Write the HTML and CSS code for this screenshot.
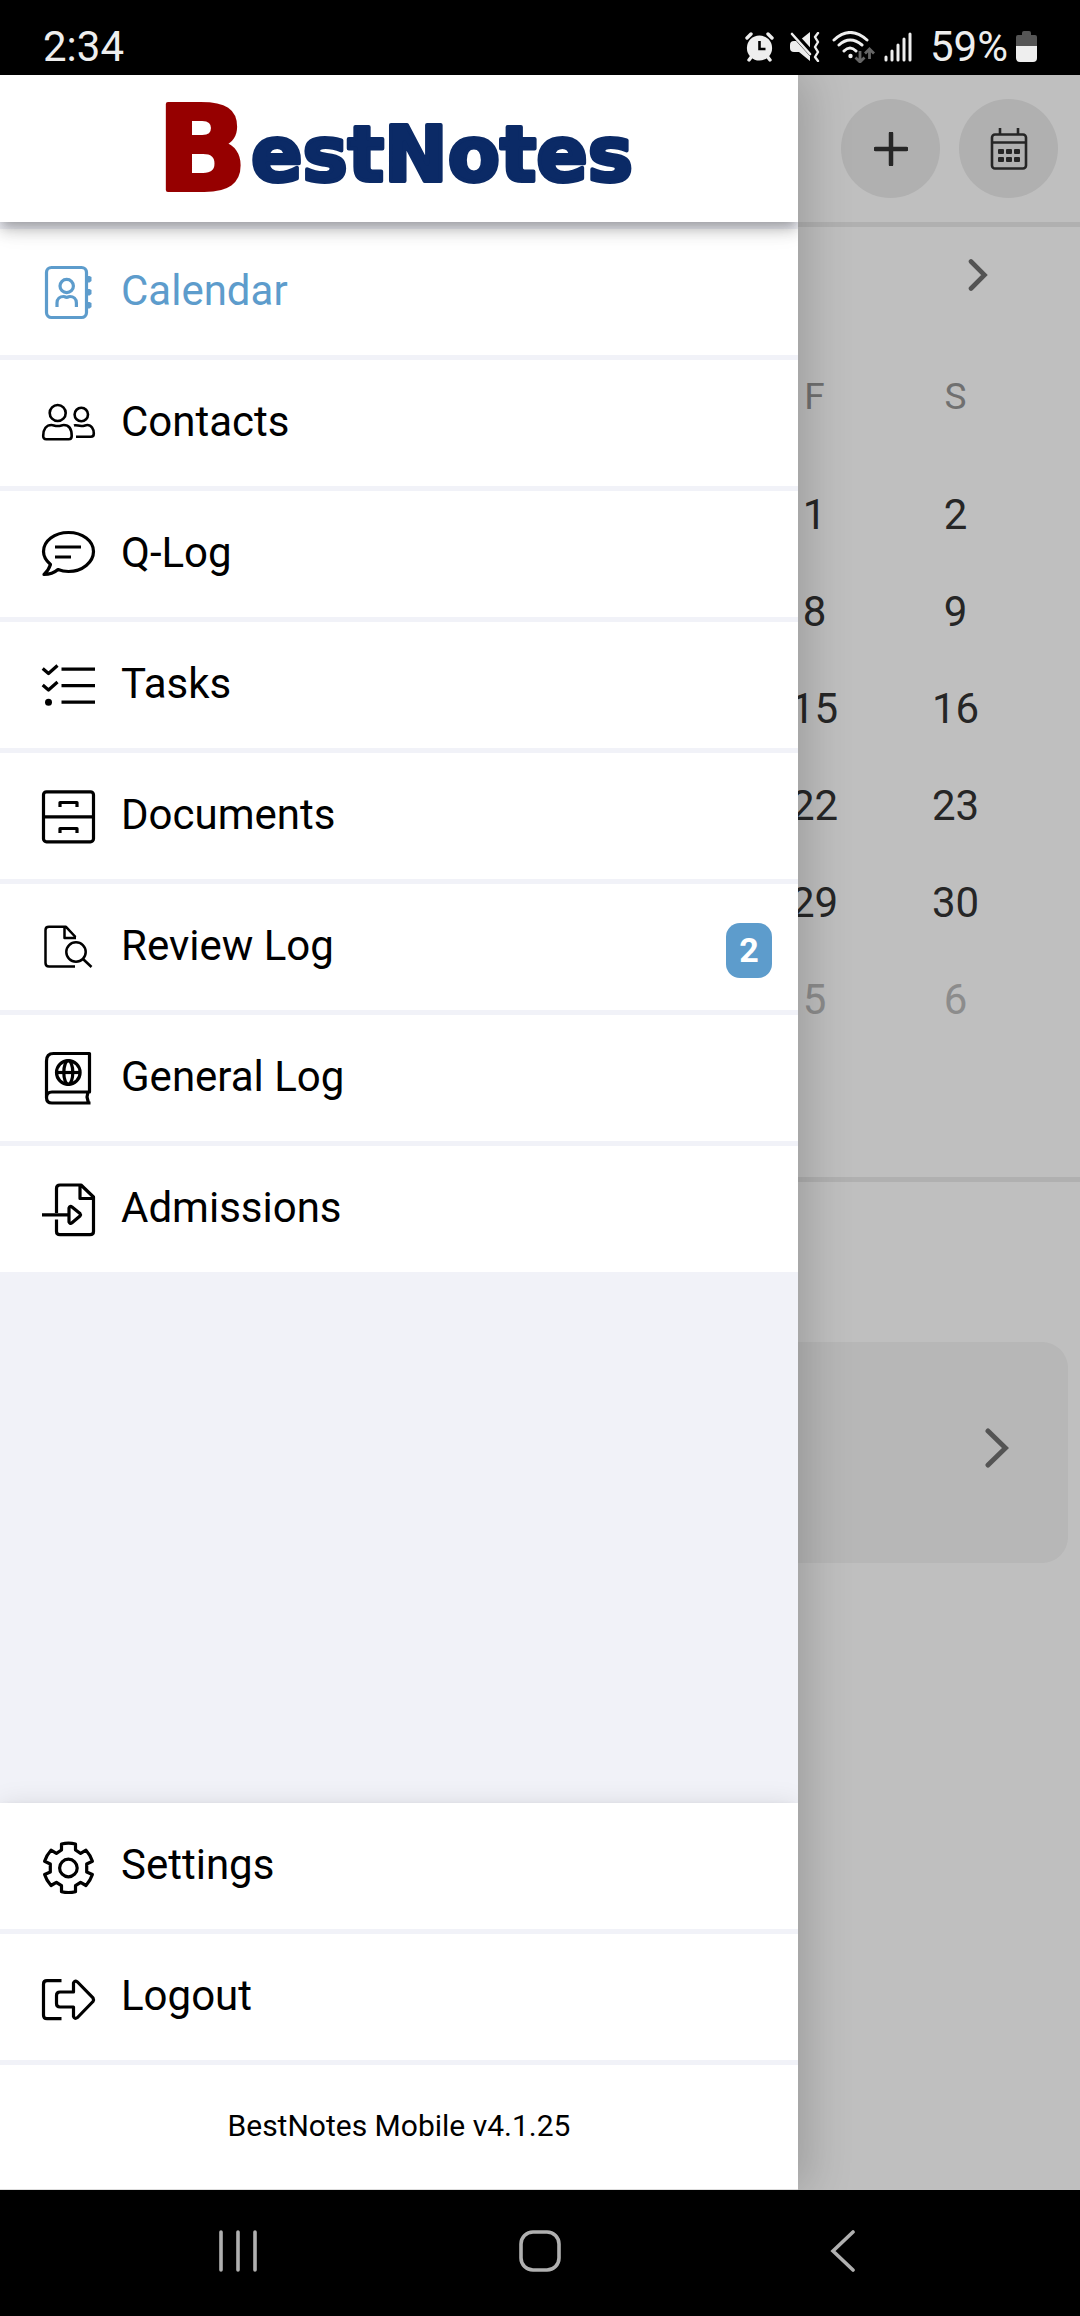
FILE: index.html
```html
<!DOCTYPE html>
<html lang="en">
<head>
<meta charset="utf-8">
<meta name="viewport" content="width=device-width, initial-scale=1">
<title>BestNotes Mobile</title>
<link rel="stylesheet" href="styles.css">
</head>
<body>
<div class="status-bar">
  <time class="status-text">2:34</time>
  <div class="status-icons">
    <svg width="32" height="30" viewBox="0 0 32 30" aria-hidden="true">
      <g stroke="#eee" stroke-width="3.4" stroke-linecap="round" fill="none"><path d="M2 6 6 2M23 2l4 4M7 24l-3 4M22 24l3 4"/></g>
      <circle cx="14.5" cy="16" r="12.6" fill="#eee"/>
      <path d="M14.5 9v8h6" fill="none" stroke="#000" stroke-width="2.6"/>
    </svg>
    <svg width="36" height="30" viewBox="0 0 36 30" aria-hidden="true">
      <path d="M25 0v29L14 20H9q-4 0-4-4v-3q0-4 4-4h3l3-1z" fill="#eee"/>
      <path d="M7 0 27 22" stroke="#000" stroke-width="6"/>
      <path d="M7 2 25 22" stroke="#eee" stroke-width="2.6" stroke-linecap="round"/>
      <path d="M33 1l-3 4 3 5-3 5 3 5-3 5 3 4" fill="none" stroke="#eee" stroke-width="2.4" stroke-linejoin="round" stroke-linecap="round"/>
    </svg>
    <svg width="47" height="32" viewBox="0 0 47 32" aria-hidden="true">
      <g fill="none" stroke="#eee" stroke-width="3" stroke-linecap="round"><path d="M5 9q16-15 33 0M10 14q11-10 23 0M15 20q6-6 12 0"/></g>
      <circle cx="21.5" cy="25" r="2.2" fill="#eee"/>
      <g fill="none" stroke="#666" stroke-width="2.8"><path d="M31 20v10M26.5 26.5 31 31l4.500-4.500M40.500 28V18M36 22.500l4.500-4.500 4.500 4.500"/></g>
    </svg>
    <svg width="38" height="30" viewBox="0 0 38 30" aria-hidden="true">
      <path d="M2 25v3M8 19v9M14 13v15M20 7v21M26 2v26" stroke="#eee" stroke-width="3" stroke-linecap="round"/>
    </svg>
    <span class="status-text">59%</span>
    <svg width="21" height="31" viewBox="0 0 21 31" aria-hidden="true">
      <path d="M0 15V6q0-2 2-2h4V2q0-2 2-2h5q2 0 2 2v2h4q2 0 2 2v9z" fill="#555"/>
      <path d="M0 15h21v12q0 4-4 4H4q-4 0-4-4z" fill="#eee"/>
    </svg>
  </div>
</div>

<div class="app">
  <main class="page">
    <header class="page-header">
      <button class="round-button" type="button" aria-label="Add event">
        <svg width="34" height="34" viewBox="0 0 34 34"><path d="M17 1.500v31M1.500 17h31" stroke="#333" stroke-width="4.5" stroke-linecap="round"/></svg>
      </button>
      <button class="round-button" type="button" aria-label="Choose date">
        <svg width="38" height="42" viewBox="0 0 38 42" fill="none" stroke="#333" stroke-width="2.6">
          <rect x="2" y="6.5" width="34" height="34" rx="3"/><path d="M2 14.500h34M10 0v7M28 0v7"/>
          <g fill="#333" stroke="none"><rect x="8" y="21" width="6" height="5" rx="1"/><rect x="16" y="21" width="6" height="5" rx="1"/><rect x="24" y="21" width="6" height="5" rx="1"/><rect x="8" y="29" width="6" height="5" rx="1"/><rect x="16" y="29" width="6" height="5" rx="1"/><rect x="24" y="29" width="6" height="5" rx="1"/></g>
        </svg>
      </button>
    </header>
    <section class="month">
      <div class="month-nav">
        <button class="icon-button" type="button" aria-label="Next month">
          <svg width="20" height="32" viewBox="0 0 20 32"><path d="M3 2.500 16.500 16 3 29.500" fill="none" stroke="#717171" stroke-width="4.6" stroke-linecap="round"/></svg>
        </button>
      </div>
      <table class="month-grid">
        <colgroup><col span="7"></colgroup>
        <thead><tr><td colspan="5"></td><th scope="col">F</th><th scope="col">S</th></tr></thead>
        <tbody>
          <tr><td colspan="5"></td><td>1</td><td>2</td></tr>
          <tr><td colspan="5"></td><td>8</td><td>9</td></tr>
          <tr><td colspan="5"></td><td>15</td><td>16</td></tr>
          <tr><td colspan="5"></td><td>22</td><td>23</td></tr>
          <tr><td colspan="5"></td><td>29</td><td>30</td></tr>
          <tr class="next-month"><td colspan="5"></td><td>5</td><td>6</td></tr>
        </tbody>
      </table>
    </section>
    <section class="events">
      <button class="event-card" type="button" aria-label="Open event">
        <svg width="24" height="40" viewBox="0 0 24 40"><path d="M3 3l17.500 17L3 37" fill="none" stroke="#717171" stroke-width="5" stroke-linecap="round"/></svg>
      </button>
    </section>
  </main>
  <div class="backdrop"></div>

  <aside class="drawer">
    <div class="drawer-body">
      <div class="drawer-header">
        <svg class="logo" width="476" height="100" viewBox="0 0 476 100" role="img" aria-label="BestNotes">
          <text class="logo-b" x="-4" y="91">B</text>
          <text class="logo-rest" x="90" y="82">estNotes</text>
        </svg>
      </div>
      <nav class="menu" aria-label="Main">
        <a class="menu-item active" href="#calendar">
          <svg class="icon" stroke-width="3.2" viewBox="0 0 53 53"><rect x="4.5" y="1.5" width="40" height="50" rx="5"/><circle cx="24.7" cy="20" r="6.7"/><path d="M15 41v-4c0-4 3-6.500 6.500-6.500 1 0 1.500.8 3.200.8s2.200-.8 3.200-.8c3.500 0 6.500 2.500 6.500 6.500v4"/><path class="solid" d="M45 10h2.500l2 1v4l-2 1.500H45zM45 23h2.500l2 1v4l-2 1.500H45zM45 36h2.500l2 1v4l-2 1.500H45z"/></svg>
          <span class="label">Calendar</span>
        </a>
        <a class="menu-item" href="#contacts">
          <svg class="icon" stroke-width="2.6" viewBox="0 0 53 53"><circle cx="15.7" cy="16" r="8"/><circle cx="39.3" cy="17.5" r="6.7"/><path d="M1.200 39C1.200 32 4.500 28 9.500 28c2 0 3 1 6.200 1s4-1 6-1c5 0 8 4 8 11 0 2-1 3.300-3 3.300H4.200c-2 0-3-1.300-3-3.300zM32 28.500c2.500-.9 4 .5 7.300.5s4-1 6-1c4 0 6.500 4 6.500 8.500 0 2-1 3.300-3 3.300H34"/></svg>
          <span class="label">Contacts</span>
        </a>
        <a class="menu-item" href="#q-log">
          <svg class="icon" stroke-width="3.2" viewBox="0 0 53 53"><path d="M8.500 36.500C4.500 33 1.500 28.500 1.500 23.500 1.500 13 12.500 4.500 26.500 4.500S51.500 13 51.500 23.500 40.500 43.500 26.500 43.500c-4 0-7-.6-10.500-2-4 3.500-8 5-14 5 3-2.500 5-5.500 6.500-10zM13 19h26M13 29h16"/></svg>
          <span class="label">Q-Log</span>
        </a>
        <a class="menu-item" href="#tasks">
          <svg class="icon" stroke-width="3.2" viewBox="0 0 53 53"><path d="M.7 9.500 6.500 14.500 15.500 6.500M.7 26 6.500 31l9-8M19.500 10.200H53M19.500 26.700H53M19.500 43.200H53"/><circle class="solid" cx="6.5" cy="43.2" r="3.5"/></svg>
          <span class="label">Tasks</span>
        </a>
        <a class="menu-item" href="#documents">
          <svg class="icon" stroke-width="3.2" viewBox="0 0 53 53"><rect x="1.5" y="1.8" width="50" height="50" rx="3"/><path d="M1.500 26.800h50M18 17v-4.500h17V17M18 43v-4.500h17V43"/></svg>
          <span class="label">Documents</span>
        </a>
        <a class="menu-item" href="#review-log">
          <svg class="icon" stroke-width="2.5" viewBox="0 0 53 53"><path d="M33 45.500H7q-3.500 0-3.500-3.500V9q0-3.200 3.500-3.200h17L33.500 16M22.500 6v11H34"/><circle cx="34" cy="31" r="9.7"/><path d="M41 38l8.500 8"/></svg>
          <span class="label">Review Log</span>
          <span class="badge">2</span>
        </a>
        <a class="menu-item" href="#general-log">
          <svg class="icon" stroke-width="3.2" viewBox="0 0 53 53"><path d="M4.500 46V9q0-7.500 7-7.500h36V40H10q-5.500 0-5.500 5.500T10 51h38.500M46 40l-1 5 1.500 6"/><circle cx="26.3" cy="20.5" r="11.8"/><ellipse cx="26.3" cy="20.5" rx="4.5" ry="11.8"/><path d="M14.500 20.500h24"/></svg>
          <span class="label">General Log</span>
        </a>
        <a class="menu-item" href="#admissions">
          <svg class="icon" stroke-width="3.2" viewBox="0 0 53 53"><path d="M14.500 30V5.500q0-3.500 3.500-3.500h21L51.500 14v34.500q0 3.200-3.500 3.200H18q-3.500 0-3.500-3.200V36.500M38 2v13.500h13M0 31.800h27M27 25v14q1 2.500 3 .8l8-6.800q1-1.200 0-2.400l-8-6.600q-2-1.500-3 1z"/></svg>
          <span class="label">Admissions</span>
        </a>
      </nav>
      <div class="drawer-footer">
        <a class="menu-item" href="#settings">
          <svg class="icon" stroke-width="3.2" viewBox="0 -1 53 53"><path d="M19.500 3q7-1.600 14 0v6l5.100 3.400L44 9.200q4.500 5 6.400 11L44.700 23v8l5.700 2.500q-2 6-6.400 11l-5.400-3.200-5.100 3.400v6q-7 1.600-14 0v-6l-5.100-3.400L9 44.500q-4.500-5-6.400-11L8.300 31v-8l-5.700-2.800Q4.500 14.200 9 9.200l5.400 3.200L19.500 9z"/><circle cx="26.4" cy="27" r="8.8"/></svg>
          <span class="label">Settings</span>
        </a>
        <a class="menu-item" href="#logout">
          <svg class="icon" stroke-width="3.2" viewBox="0 -2 53 53"><path d="M19.500 7.700H5q-3.500 0-3.500 3.500v31q0 3.500 3.500 3.500h14.500M31.500 19H18q-3.500 0-3.500 3.500v8q0 3.500 3.500 3.500h13.500v9.500q1 3 4 1L51 28.500q1-1.800 0-3.600L35.500 9q-3-2-4 1z"/></svg>
          <span class="label">Logout</span>
        </a>
        <p class="version">BestNotes Mobile v4.1.25</p>
      </div>
    </div>
  </aside>
</div>

<div class="system-nav">
  <button class="icon-button" type="button" aria-label="Recent apps"><svg width="42" height="42" viewBox="0 0 42 42"><path d="M4 2v38M21 2v38M38 2v38" stroke="#b0b0b0" stroke-width="3.6" stroke-linecap="round"/></svg></button>
  <button class="icon-button" type="button" aria-label="Home"><svg width="42" height="42" viewBox="0 0 42 42"><rect x="2" y="2" width="38" height="38" rx="12" fill="none" stroke="#b0b0b0" stroke-width="3.6"/></svg></button>
  <button class="icon-button" type="button" aria-label="Back"><svg width="42" height="42" viewBox="0 0 42 42"><path d="M32 2 12 21l20 19" fill="none" stroke="#b0b0b0" stroke-width="3.6" stroke-linecap="round"/></svg></button>
</div>
</body>
</html>
```

FILE: styles.css
```css
* {
  box-sizing: border-box;
}

body {
  margin: 0;
  min-height: 100vh;
  display: flex;
  flex-direction: column;
  background: #000;
  color: #000;
  font-family: Roboto, "Liberation Sans", sans-serif;
  font-size: 42px;
}

button {
  padding: 0;
  border: 0;
  background: none;
  font: inherit;
}

svg {
  display: block;
  flex: none;
}

/* Phone status bar */
.status-bar {
  height: 75px;
  padding: 18px 43px 0;
  display: flex;
  align-items: center;
  justify-content: space-between;
  color: #eee;
}

.status-icons {
  display: flex;
  align-items: center;
  gap: 8px;
}

/* App area: calendar page with the drawer over it */
.app {
  position: relative;
  flex: 1;
  display: flex;
  flex-direction: column;
  overflow: hidden;
}

.page {
  flex: 1;
  background: #fff;
  color: #333;
}

.page-header {
  height: 152px;
  padding: 0 22px;
  display: flex;
  align-items: center;
  justify-content: flex-end;
  gap: 19px;
  border-bottom: 5px solid #ebebeb;
}

.round-button {
  width: 99px;
  height: 99px;
  display: grid;
  place-items: center;
  border-radius: 50%;
  background: #ebebeb;
}

.icon-button {
  display: grid;
  place-items: center;
}

.month {
  padding: 0 54px 129px 39px;
  border-bottom: 5px solid #ebebeb;
}

.month-nav {
  height: 95px;
  padding-right: 38px;
  display: flex;
  align-items: center;
  justify-content: flex-end;
}

.month-grid {
  width: 100%;
  table-layout: fixed;
  border-collapse: collapse;
  text-align: center;
}

.month-grid td,
.month-grid th {
  height: 97px;
  padding: 0;
}

.month-grid th {
  height: 144px;
  padding-top: 4px;
  color: #969696;
  font-size: 37px;
  font-weight: 400;
}

.next-month {
  color: #bbb;
}

.events {
  padding: 160px 12px 40px;
}

.event-card {
  width: 100%;
  height: 221px;
  padding: 0 59px 10px;
  display: flex;
  align-items: center;
  justify-content: flex-end;
  border-radius: 26px;
  background: #f4f4f4;
}

.backdrop {
  position: absolute;
  inset: 0;
  background: rgba(0, 0, 0, 0.25);
}

/* Drawer */
.drawer {
  position: absolute;
  top: 0;
  bottom: 0;
  left: 0;
  width: 798px;
  max-width: 85%;
  box-shadow: 10px 0 42px rgba(0, 0, 0, 0.18);
}

.drawer-body {
  height: 100%;
  display: flex;
  flex-direction: column;
  overflow: hidden;
  background: #f1f2f8;
}

.drawer-header,
.drawer-footer {
  position: relative;
  background: #fff;
  box-shadow: 0 5px 10px -3px rgba(0, 0, 0, 0.2), 0 10px 13px rgba(0, 0, 0, 0.14), 0 3px 26px rgba(0, 0, 0, 0.12);
}

.drawer-header {
  height: 147px;
  display: flex;
  align-items: center;
  justify-content: center;
}

.logo {
  overflow: visible;
  font-family: "DejaVu Sans", sans-serif;
  font-weight: 700;
  stroke-linejoin: round;
}

.logo-b {
  fill: #960000;
  stroke: #960000;
  stroke-width: 4px;
  font-size: 118px;
}

.logo-rest {
  fill: #0b2a66;
  stroke: #0b2a66;
  stroke-width: 4px;
  font-size: 76px;
}

.menu {
  flex: 1;
  padding-top: 7px;
  display: flex;
  flex-direction: column;
  gap: 5px;
}

.drawer-footer {
  display: flex;
  flex-direction: column;
}

.drawer-footer .menu-item {
  height: 131px;
  border-bottom: 5px solid #f1f2f8;
}

.menu-item {
  height: 126px;
  padding: 0 26px 0 42px;
  display: flex;
  align-items: center;
  gap: 26px;
  background: #fff;
  color: #000;
  text-decoration: none;
}

.menu-item.active {
  color: #5d9ccc;
}

.label {
  flex: 1;
  padding-bottom: 3px;
}

.icon {
  width: 53px;
  height: 53px;
  overflow: visible;
  fill: none;
  stroke: currentColor;
  stroke-linejoin: round;
}

.icon .solid {
  fill: currentColor;
  stroke: none;
}

.badge {
  min-width: 46px;
  height: 55px;
  margin-top: 7px;
  padding: 0 13px;
  border-radius: 14px;
  background: #5d9ccc;
  color: #fff;
  font-size: 34px;
  font-weight: 700;
  line-height: 55px;
  text-align: center;
}

.version {
  margin: 0;
  padding-bottom: 2px;
  border-bottom: 1px solid #ddd;
  font-size: 30px;
  line-height: 122px;
  text-align: center;
}

/* Phone navigation bar */
.system-nav {
  height: 126px;
  padding: 0 8% 4px;
  display: grid;
  grid-template-columns: repeat(3, 1fr);
}
```
